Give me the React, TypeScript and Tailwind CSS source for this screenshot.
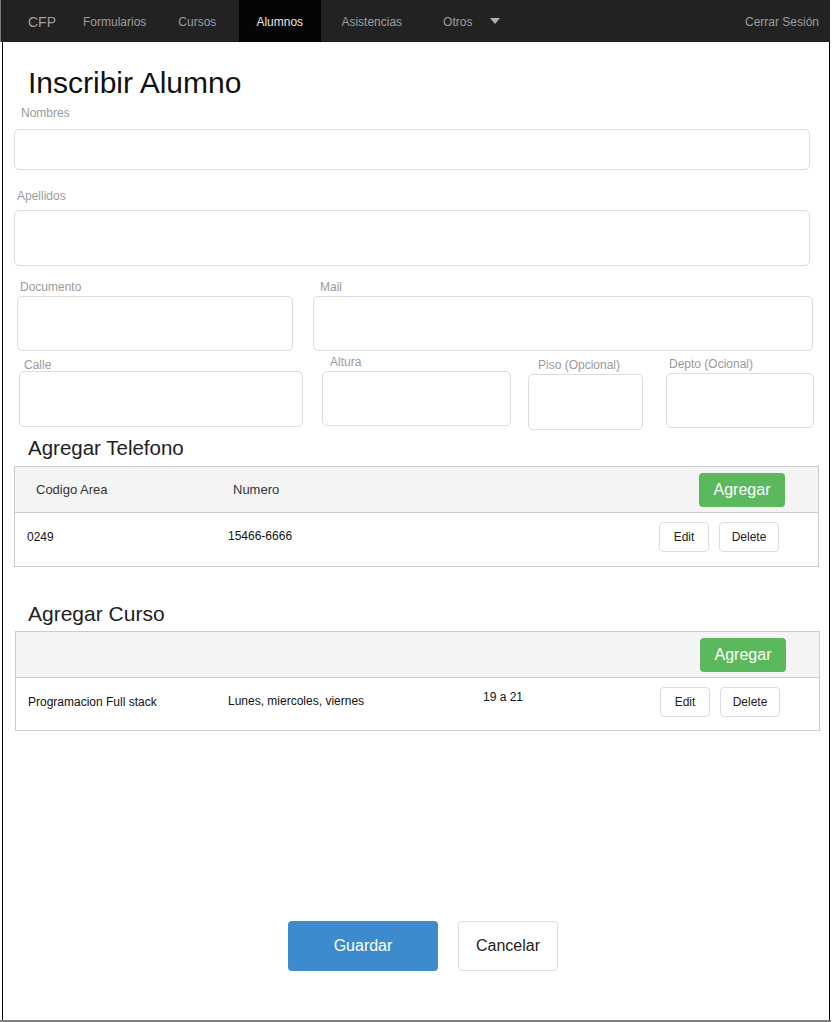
const Label = ({ text, className = '' }: { text: string; className?: string }) => (
  <div className={`h-[12px] text-[12px] leading-[12px] text-[#9a9a9a] whitespace-nowrap ${className}`}>{text}</div>
);

const Input = ({ className = '' }: { className?: string }) => (
  <div className={`border border-[#dcdcdc] rounded-[5px] bg-white ${className}`} />
);

const SmallButton = ({ text, className = '' }: { text: string; className?: string }) => (
  <button className={`h-[30px] border border-[#dddddd] rounded-[4px] bg-white text-[12px] text-[#222] ${className}`}>{text}</button>
);

const AddButton = () => (
  <button className="w-[86px] h-[34px] rounded-[4px] bg-[#5cb85c] text-white text-[16px]">Agregar</button>
);

export default function App() {
  return (
    <div className="w-[832px] h-[1022px] bg-white font-['Liberation_Sans',Arial,sans-serif]">
      <div className="w-[831px] h-[1022px] border-b-2 border-[#808080] flex flex-col">
        {/* navbar */}
        <nav className="h-[42px] w-[830px] bg-[#222222] border-l border-[#7a7a7a] flex items-stretch text-[12px] text-[#9d9d9d] shrink-0">
          <span className="ml-[27px] self-center mt-[2px] text-[14px] text-[#a0a0a0]">CFP</span>
          <span className="ml-[27px] self-center mt-[2px]">Formularios</span>
          <span className="ml-[32px] self-center mt-[2px]">Cursos</span>
          <span className="ml-[23px] w-[82px] bg-[#050505] text-[#e6e6e6] flex items-center pl-[17px] pt-[2px]">Alumnos</span>
          <span className="ml-[20px] self-center mt-[2px]">Asistencias</span>
          <span className="ml-[41px] self-center mt-[2px]">Otros</span>
          <svg className="ml-[18px] self-center" width="10" height="6" viewBox="0 0 10 6">
            <path d="M0 0 L10 0 L5 6 Z" fill="#b0b0b0" />
          </svg>
          <span className="ml-auto mr-[11px] self-center mt-[2px]">Cerrar Sesión</span>
        </nav>

        {/* body */}
        <div className="flex-1 ml-[2px] w-[828px] border-l border-r border-black flex flex-col">
          <h1 className="mt-[26px] ml-[25px] h-[30px] text-[30px] leading-[30px] text-[#111]">Inscribir Alumno</h1>

          <Label text="Nombres" className="mt-[9px] ml-[18px]" />
          <Input className="mt-[10px] ml-[11px] w-[796px] h-[41px]" />

          <Label text="Apellidos" className="mt-[20px] ml-[14px]" />
          <Input className="mt-[8px] ml-[11px] w-[796px] h-[56px]" />

          {/* documento / mail */}
          <div className="mt-[15px] flex items-start">
            <div className="ml-[14px]">
              <Label text="Documento" className="ml-[3px]" />
              <Input className="mt-[3px] w-[276px] h-[55px]" />
            </div>
            <div className="ml-[20px]">
              <Label text="Mail" className="ml-[7px]" />
              <Input className="mt-[3px] w-[500px] h-[55px]" />
            </div>
          </div>

          {/* direccion */}
          <div className="mt-[5px] flex items-start">
            <div className="ml-[16px]">
              <Label text="Calle" className="mt-[3px] ml-[5px]" />
              <Input className="w-[284px] h-[56px]" />
            </div>
            <div className="ml-[19px]">
              <Label text="Altura" className="ml-[8px]" />
              <Input className="mt-[3px] w-[189px] h-[55px]" />
            </div>
            <div className="ml-[17px]">
              <Label text="Piso (Opcional)" className="mt-[3px] ml-[10px]" />
              <Input className="mt-[3px] w-[115px] h-[56px]" />
            </div>
            <div className="ml-[23px]">
              <Label text="Depto (Ocional)" className="mt-[2px] ml-[3px]" />
              <Input className="mt-[3px] w-[148px] h-[55px]" />
            </div>
          </div>

          {/* telefono */}
          <h2 className="mt-[8px] ml-[25px] h-[20px] text-[20.5px] leading-[20px] text-[#222]">Agregar Telefono</h2>
          <div className="mt-[8px] ml-[11px] w-[805px] h-[101px] border border-[#cccccc] flex flex-col">
            <div className="h-[46px] bg-[#f4f4f4] border-b border-[#cccccc] flex items-center text-[13px] text-[#333]">
              <span className="ml-[21px] w-[197px]">Codigo Area</span>
              <span>Numero</span>
              <div className="ml-auto mr-[33px]">
                <AddButton />
              </div>
            </div>
            <div className="flex items-start pt-[9px] text-[12px] leading-[12px] text-[#111]">
              <span className="ml-[12px] w-[201px] mt-[9px]">0249</span>
              <span className="mt-[8px]">15466-6666</span>
              <div className="ml-auto mr-[39px] flex gap-[10px]">
                <SmallButton text="Edit" className="w-[50px]" />
                <SmallButton text="Delete" className="w-[60px]" />
              </div>
            </div>
          </div>

          {/* curso */}
          <h2 className="mt-[37px] ml-[25px] h-[20px] text-[21px] leading-[20px] text-[#222]">Agregar Curso</h2>
          <div className="mt-[7px] ml-[12px] w-[805px] h-[100px] border border-[#cccccc] flex flex-col">
            <div className="h-[46px] bg-[#f4f4f4] border-b border-[#cccccc] flex items-center">
              <div className="ml-auto mr-[33px]">
                <AddButton />
              </div>
            </div>
            <div className="flex items-start pt-[9px] text-[12px] leading-[12px] text-[#111]">
              <span className="ml-[12px] w-[200px] mt-[9px]">Programacion Full stack</span>
              <span className="w-[255px] mt-[8px]">Lunes, miercoles, viernes</span>
              <span className="mt-[4px]">19 a 21</span>
              <div className="ml-auto mr-[39px] flex gap-[10px]">
                <SmallButton text="Edit" className="w-[50px]" />
                <SmallButton text="Delete" className="w-[60px]" />
              </div>
            </div>
          </div>

          {/* acciones */}
          <div className="mt-[190px] ml-[285px] flex gap-[20px]">
            <button className="w-[150px] h-[50px] rounded-[4px] bg-[#3d8bcd] text-white text-[16px]">Guardar</button>
            <button className="w-[100px] h-[50px] rounded-[4px] border border-[#dddddd] bg-white text-[#222] text-[16px]">Cancelar</button>
          </div>
        </div>
      </div>
    </div>
  );
}
